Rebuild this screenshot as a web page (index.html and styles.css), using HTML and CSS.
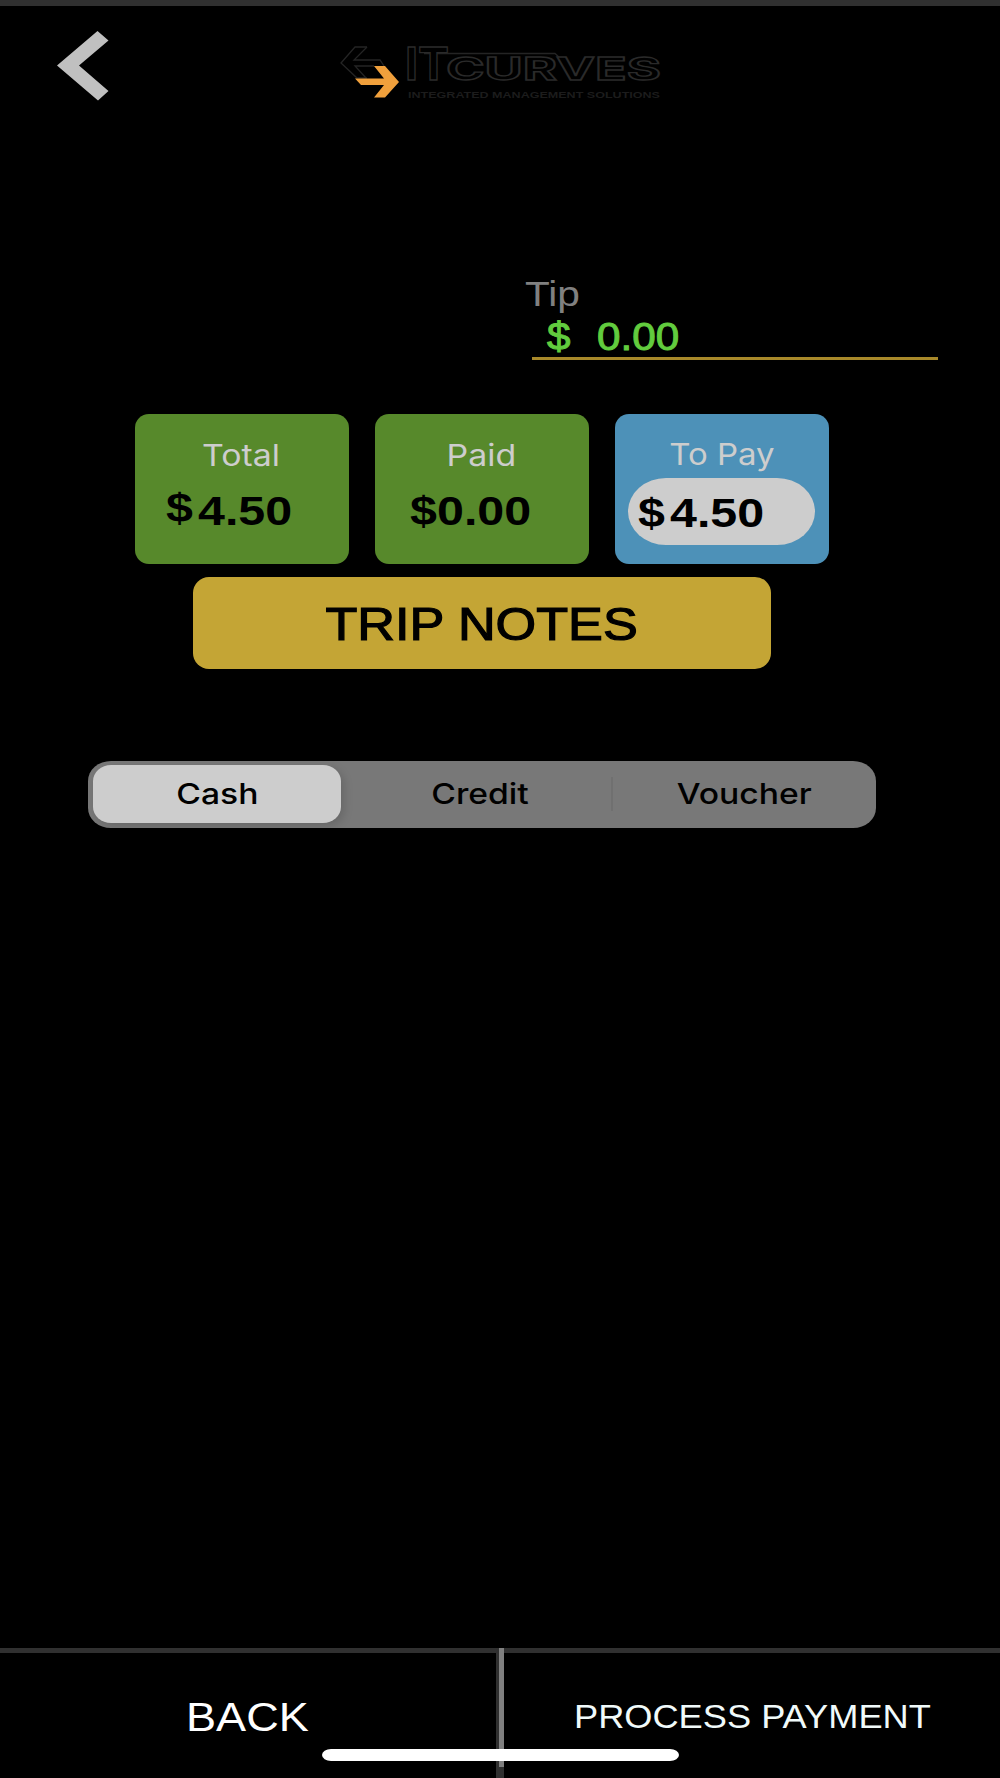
FILE: index.html
```html
<!DOCTYPE html>
<html lang="en">

<head>
    <meta charset="UTF-8">
    <meta name="viewport" content="width=device-width, initial-scale=1.0">
    <title>Payment</title>
    <link rel="stylesheet" href="styles.css">
</head>

<body>
    <div class="screen">
        <div class="header">
            <svg class="back-icon" width="52" height="70" viewBox="57 31 52 70">
                <polygon points="57,65.5 97.5,31 108.5,40.5 79,65.5 108.5,91 98,100.5" fill="#c0c0c0" />
            </svg>
            <svg class="logo" width="330" height="80" viewBox="338 31 330 80">
                <g fill="none" stroke="#242424" stroke-width="1.3">
                    <path d="M367 47H355L341 63L357 78H367" />
                    <path d="M367 47L354 60H380L384 66" />
                    <path d="M374 66H355L366 78" />
                    <path d="M424 53.5H555L562 60" />
                </g>
                <polygon points="374,66 385,66 399,82 385,97.5 374,97.5 384,85 361,85 355,78.5 384,78.5" fill="#f0a03c" />
                <g class="logo-word">
                    <text x="405" y="80" font-size="45" textLength="44" lengthAdjust="spacingAndGlyphs">IT</text>
                    <text x="446" y="80" font-size="31" textLength="215" lengthAdjust="spacingAndGlyphs">CURVES</text>
                </g>
                <text class="logo-tag" x="408" y="97.5" font-size="9" textLength="252" lengthAdjust="spacingAndGlyphs">INTEGRATED MANAGEMENT SOLUTIONS</text>
            </svg>
        </div>

        <div class="tip">
            <div class="tip-label"><span class="wide">Tip</span></div>
            <div class="tip-input">
                <span class="wide">$</span>
                <span class="wide">0.00</span>
            </div>
        </div>

        <div class="cards">
            <div class="card total">
                <div class="card-label"><span>Total</span></div>
                <div class="amount"><span class="sign">$</span><span class="num">4.50</span></div>
            </div>
            <div class="card paid">
                <div class="card-label"><span>Paid</span></div>
                <div class="amount"><span class="sign">$</span><span class="num">0.00</span></div>
            </div>
            <div class="card to-pay">
                <div class="card-label"><span>To Pay</span></div>
                <div class="amount"><span class="sign">$</span><span class="num">4.50</span></div>
            </div>
        </div>

        <div class="notes-btn"><span>TRIP NOTES</span></div>

        <div class="tabs">
            <div class="tab active"><span>Cash</span></div>
            <div class="tab credit"><span>Credit</span></div>
            <div class="tab"><span>Voucher</span></div>
        </div>

        <div class="footer">
            <div class="footer-btn back"><span>BACK</span></div>
            <div class="divider"></div>
            <div class="footer-btn process"><span>PROCESS PAYMENT</span></div>
            <div class="home-bar"></div>
        </div>
    </div>
</body>

</html>
```
FILE: styles.css
```css
* {
    margin: 0;
    padding: 0;
    box-sizing: border-box;
}

body {
    background-color: #000;
    font-family: "Liberation Sans", Arial, sans-serif;
}

span {
    display: block;
    white-space: nowrap;
}

.screen {
    display: flex;
    flex-direction: column;
    width: 1000px;
    height: 1778px;
    overflow: hidden;
}

.header {
    display: flex;
    align-items: flex-start;
    height: 271px;
    border-top: 6px solid #303030;
    padding: 25px 0 0 57px;
}

.logo {
    margin-left: 229px;
}

.logo-word {
    font-family: Inter, sans-serif;
    font-weight: 700;
    fill: #000;
    stroke: #2a2a2a;
    stroke-width: 1.3;
}

.logo-tag {
    font-weight: 700;
    fill: #1c1c1c;
}

/* 小费 */
.tip {
    width: 406px;
    margin-left: 532px;
}

.tip-label {
    height: 44px;
    margin-left: -7px;
    font-size: 35px;
    line-height: 45px;
    color: #808080;
}

.wide {
    transform: scaleX(1.13);
    transform-origin: left;
}

.tip-label .wide {
    transform: scaleX(1.16);
}

.tip-input {
    display: grid;
    grid-template-columns: 50px 1fr;
    height: 45px;
    padding: 2px 0 0 15px;
    border-bottom: 3px solid #a8892a;
    font-size: 38px;
    line-height: 41px;
    color: #62cc3e;
    -webkit-text-stroke: 1px #62cc3e;
}

.tip-input .wide {
    transform: scaleX(1.11);
}

.cards {
    display: flex;
    gap: 26px;
    margin: 53.5px 0 0 135px;
}

.card {
    width: 213.5px;
    height: 150px;
    margin-right: .5px;
    padding-top: 21px;
    border-radius: 14px;
    background-color: #57892b;
}

.card-label {
    display: flex;
    justify-content: center;
    font-family: Inter, sans-serif;
    font-size: 30px;
    line-height: 40px;
    color: #cdcdcd;
}

.card-label span {
    transform: translateX(-.5px) scaleX(1.13);
}

.amount {
    display: grid;
    grid-template-columns: 32px 1fr;
    margin-top: 11px;
    padding-left: 31px;
    font-size: 41px;
    font-weight: 700;
    line-height: 51px;
}

.amount span {
    transform: scaleX(1.18);
    transform-origin: left;
}

.total .sign {
    margin-top: -2.5px;
}

.paid .amount {
    grid-template-columns: 27px 1fr;
    padding-left: 34.5px;
}

.to-pay {
    padding-top: 20px;
    background-color: #4d91b8;
}

.to-pay .card-label span {
    transform: scaleX(1.1);
}

.to-pay .amount {
    width: 187px;
    height: 67px;
    margin: 4.5px 0 0 13px;
    padding: 9.5px 0 0 10px;
    border-radius: 38px / 33.5px;
    background-color: #cdcdcd;
}

.notes-btn {
    display: flex;
    align-items: center;
    justify-content: center;
    width: 578px;
    height: 92px;
    margin: 13.5px 0 0 192.5px;
    padding-top: 2px;
    border-radius: 16px;
    background-color: #c4a535;
    font-size: 46px;
    -webkit-text-stroke: 1.2px #000;
}

.notes-btn span {
    transform: scaleX(1.135);
}

.tabs {
    display: grid;
    grid-template-columns: 248px 1fr 263px;
    width: 787.5px;
    height: 67px;
    margin: 91.5px 0 0 88px;
    padding: 4.5px 0 4.5px 5px;
    border-radius: 23px / 20px;
    background-color: #787878;
    font-family: Inter, sans-serif;
    font-size: 29px;
    font-weight: 450;
}

.tab {
    display: flex;
    align-items: center;
    justify-content: center;
    line-height: 58px;
}

.tab span {
    transform: scaleX(1.16);
}

.tab.active {
    border-radius: 18px / 16px;
    background-color: #cdcdcd;
    box-shadow: 3px 3px 10px rgba(0, 0, 0, .15);
    font-weight: 550;
}

.tab.credit {
    padding-left: 7px;
    background: linear-gradient(#707070, #707070) right center / 2px 34px no-repeat;
}

.footer {
    position: relative;
    display: flex;
    height: 130px;
    margin-top: auto;
    border-top: 5px solid #303030;
}

.footer-btn {
    padding-top: 39px;
    color: #fff;
    line-height: 50px;
}

.footer-btn span {
    transform: scaleX(1.1);
    transform-origin: left;
}

.back {
    width: 496px;
    padding-left: 186px;
    font-size: 41px;
}

.process {
    padding: 38px 0 0 69.5px;
    font-size: 34px;
    color: #f0fafa;
}

.process span {
    transform: scaleX(1.065);
}

.divider {
    width: 8px;
    margin-top: -5px;
    background: linear-gradient(#808080, #808080) 3px 0 / 5px 119px no-repeat #303030;
}

/* 底部横条 */
.home-bar {
    position: absolute;
    left: 322px;
    top: 96px;
    width: 357px;
    height: 12px;
    border-radius: 9px / 6px;
    background-color: #fff;
}
```
